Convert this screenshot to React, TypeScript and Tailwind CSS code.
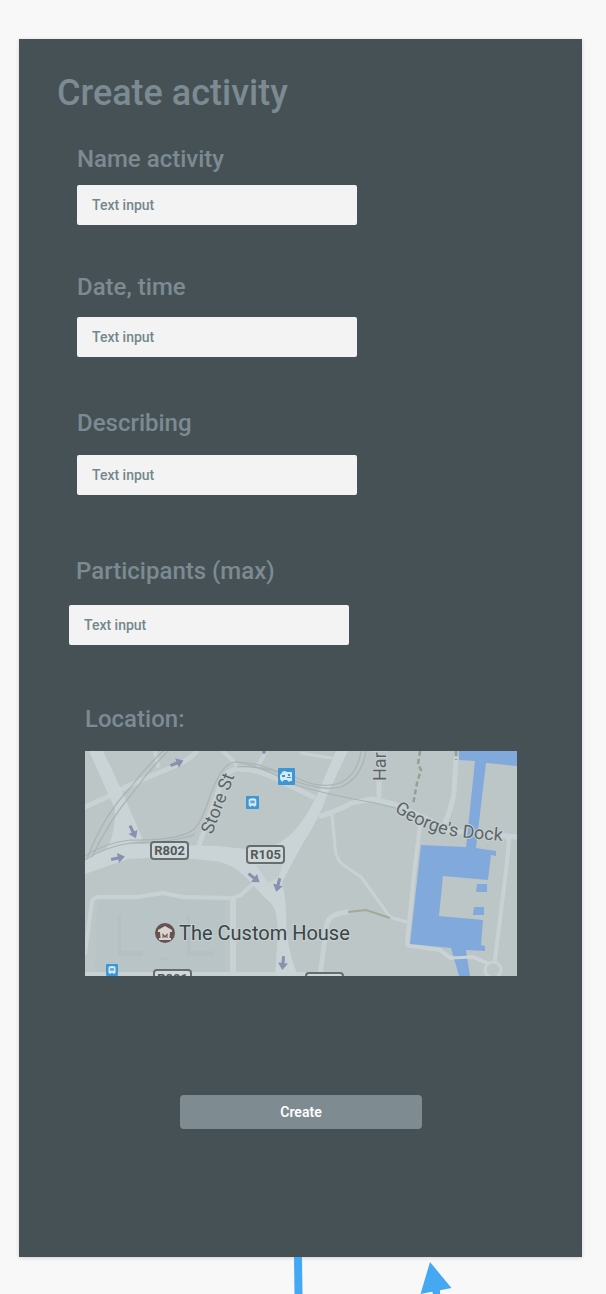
import React from "react";

type FieldProps = {
  id: string;
  label: string;
  className: string;
  labelClass?: string;
};

function Field({ id, label, className, labelClass = "" }: FieldProps) {
  return (
    <div className={`flex max-w-[280px] flex-col ${className}`}>
      <label htmlFor={id} className={`text-2xl leading-8 font-medium whitespace-nowrap ${labelClass}`}>
        {label}
      </label>
      <input
        id={id}
        type="text"
        placeholder="Text input"
        className="h-10 w-full rounded-xs bg-[#f3f3f3] px-[15px] text-sm font-medium text-[#5f7378] outline-none placeholder:text-[#74878c] placeholder:opacity-100"
      />
    </div>
  );
}

function RoadArrow({ x, y, angle }: { x: number; y: number; angle: number }) {
  return (
    <path
      d="M-7 -1.5H0V-5L7 0L0 5V1.5H-7Z"
      fill="#8791b0"
      transform={`translate(${x} ${y}) rotate(${angle})`}
    />
  );
}

function RoadSign({ x, y, name }: { x: number; y: number; name: string }) {
  return (
    <g>
      <rect x={x} y={y} width="37" height="17" rx="3" fill="#d0d9da" stroke="#666c70" strokeWidth="2" />
      <text x={x + 18.5} y={y + 13} textAnchor="middle" fontSize="13" fontWeight="700" fill="#55595c">
        {name}
      </text>
    </g>
  );
}

function TransitStop({ x, y, size }: { x: number; y: number; size: number }) {
  return (
    <svg x={x} y={y} width={size} height={size} viewBox="0 0 12 12">
      <rect width="12" height="12" rx="1" fill="#3c97d4" />
      <path d="M2.500 3.500Q2.500 2 6 2T9.500 3.500V9H8.500V10H7.200V9H4.800V10H3.500V9H2.500Z" fill="#d8e8f2" />
      <path d="M4 4.200H8V6.700H4Z" fill="#5aa5d8" />
    </svg>
  );
}

function LocationMap() {
  return (
    <svg
      viewBox="0 0 432 225"
      role="img"
      aria-label="Map around The Custom House"
      className="block w-full"
      fontFamily="Roboto, sans-serif"
    >
      <defs>
        <path id="dock-road" d="M309 60C325 71 342 79 358 83C374 87 395 88 450 93" />
      </defs>
      <rect width="432" height="225" fill="#bcc6c7" />

      <path d="M12 151L52 149L78 144L98 149L140 151V225H10Z" fill="#b9c4c7" />
      <g fill="#b5c0c3">
        <path d="M33 164H36V200H58V205H33Z" />
        <path d="M102 164H105V200H128V205H102Z" />
        <path d="M74 209Q79 202 84 209L82 210Q79 206 76 210Z" />
      </g>

      <g fill="none" stroke="#c8d2d4" strokeLinecap="round" strokeLinejoin="round">
        <path d="M0 202L7 150Q9 146 15 146L52 146L78 142L98 146L148 147" strokeWidth="4" />
        <path d="M148 148V225" strokeWidth="6" />
        <path d="M0 223H220" strokeWidth="4" />
        <path d="M148 147L156 144L168 133" strokeWidth="4" />
        <path d="M180 113V133M176 127H192" strokeWidth="2" />
        <path d="M0 56L20 47L45 34L85 17Q104 10 112 0" strokeWidth="5" />
        <path d="M70 0L73 15M138 0L151 13M181 0L173 15" strokeWidth="4" />
        <path d="M114 94L134 38Q140 19 152 18Q171 17 200 32L228 46" strokeWidth="5" />
        <path d="M216 2L246 7" strokeWidth="3" />
        <path d="M236 65Q250 61 267 52L286 48L309 53L340 67L365 80L432 86" strokeWidth="5" />
        <path d="M247 64L250 96Q251 108 257 113L276 126L305 166L321 171" strokeWidth="3" />
        <path d="M294 28V45M371 8L369 42Q367 55 360 72" strokeWidth="5" />
        <path d="M335 75L330 114L322 192Q322 195 326 195L355 199L365 207L388 206L402 212M424 88L422 112L410 209" strokeWidth="4" />
        <circle cx="408" cy="219" r="8" strokeWidth="3" />
        <path d="M263 161Q246 162 242 172L235 225" strokeWidth="5" />
      </g>

      <g fill="#cad4d6">
        <path d="M4 0H18L36 38L58 89L20 98Q30 88 30 58Z" />
        <path d="M0 108Q28 92 53 93L133 95L160 98Q186 100 200 88Q217 76 233 42L251 0H263L243 42Q233 70 218 92L197 131Q201 150 201 160Q200 195 213 225H190L193 180Q192 154 183 150L167 133Q149 111 127 110Q90 104 43 108L0 123Z" />
      </g>
      <path d="M171 114L179 126L183 132L193 127L198 113Z" fill="#c1cbcd" />

      <g fill="none" stroke="#aab3b6" strokeWidth="1.2">
        <path d="M78 0Q59 18 45 37Q18 65 2 108M83 0Q64 19 50 39Q24 69 7 106" />
        <path d="M0 105Q20 92 45 89Q93 90 108 79Q116 73 125 45Q137 12 150 11Q178 11 203 27Q234 41 256 36Q277 27 281 0" />
        <path d="M0 109Q20 96 45 92Q94 91 110 83" />
        <path d="M150 11Q175 14 205 32Q234 42 290 52L314 58" />
        <path d="M152 16Q176 14 210 26Q234 39 255 32Q273 23 276 0" />
      </g>

      <g fill="#82a9dc">
        <path d="M374 0H432V15L401 12L391 97L411 100V105L406 104L403 129L358 125L354 165L398 169L396 194L400 195V200L381 199L385 225H374L366 197L325 193L336 94L381 96L390 10L374 9Z" />
        <path d="M392 133H402V141H391ZM389 156H399V164H388Z" />
      </g>
      <path d="M358 201L365 207L388 206L402 212" fill="none" stroke="#cad4d6" strokeWidth="3" />
      <path d="M335 0L333 13L336 19L332 32L328 54M371 0V9" fill="none" stroke="#969f93" strokeWidth="2.500" strokeDasharray="5 3" />
      <path d="M263 161L281 159L305 167" fill="none" stroke="#a3a994" strokeWidth="2" />

      <RoadArrow x={92} y={12} angle={-22} />
      <RoadArrow x={48} y={81} angle={65} />
      <RoadArrow x={33} y={107} angle={-12} />
      <RoadArrow x={169} y={127} angle={38} />
      <RoadArrow x={193} y={134} angle={105} />
      <RoadArrow x={198} y={212} angle={95} />
      <circle cx="179" cy="1" r="2" fill="#8791b0" />

      <rect x="193" y="17" width="17" height="17" rx="1" fill="#3c97d4" />
      <path d="M196 23Q198 18 202 21H207V30H205L204 31L202 29H199L197 31L195 28V24Z" fill="#d8e8f2" />
      <path d="M197 24H200V26H197ZM203 23H205V25H203ZM202 26H206V27H202Z" fill="#3c97d4" />
      <TransitStop x={161} y={45} size={13} />
      <TransitStop x={21} y={213} size={12} />

      <RoadSign x={66} y={91} name="R802" />
      <RoadSign x={162} y={95} name="R105" />
      <RoadSign x={69} y={219} name="R801" />
      <RoadSign x={221} y={222} name="R801" />

      <g fill="#5c6467" stroke="#c6d0d1" strokeWidth="2" paintOrder="stroke">
        <text fontSize="18" transform="translate(127 84) rotate(-69)">Store St</text>
        <text fontSize="18" transform="translate(301 30) rotate(-90)">Harbour</text>
        <text fontSize="18">
          <textPath href="#dock-road">George's Dock</textPath>
        </text>
      </g>

      <circle cx="80" cy="182" r="10" fill="#665350" />
      <path d="M73 179L80 175L87 179V181H73ZM75 181H85L84.500 187H86V189H74V187H75.500Z" fill="#d9d3d1" />
      <path d="M77.500 182L80 185L82.500 182V187H81.500V185L80 187L78.500 185V187H77.500Z" fill="#665350" />
      <text x="94" y="189" fontSize="20" fill="#3b4448" stroke="#c6d0d1" strokeWidth="2" paintOrder="stroke">
        The Custom House
      </text>
    </svg>
  );
}

export default function App() {
  return (
    <div className="min-h-screen overflow-hidden bg-[#f8f8f8] pt-[39px] font-[Roboto,sans-serif]">
      <main className="mr-6 ml-[19px] bg-[#465156] pt-[33px] pb-32 text-[#7b8b91] shadow-[0_1px_4px_rgba(0,0,0,0.15)]">
        <h1 className="ml-[38px] text-4xl leading-[42px] font-medium">Create activity</h1>
        <form onSubmit={(event) => event.preventDefault()}>
          <Field id="activity-name" label="Name activity" className="mt-[29px] ml-[58px] gap-[10px]" />
          <Field id="activity-date" label="Date, time" className="mt-[46px] ml-[58px] gap-[14px]" />
          <Field id="activity-description" label="Describing" className="mt-[50px] ml-[58px] gap-4" />
          <Field
            id="activity-participants"
            label="Participants (max)"
            className="mt-[60px] ml-[50px] gap-[18px]"
            labelClass="pl-[7px]"
          />
          <section className="mt-[58px] mr-[65px] ml-[66px]">
            <h2 className="mb-4 text-2xl leading-8 font-medium">Location:</h2>
            <LocationMap />
          </section>
          <div className="mt-[119px] mr-[160px] ml-[161px]">
            <button
              type="submit"
              className="block h-[34px] w-full rounded bg-[#7e8c92] text-sm font-semibold text-white"
            >
              Create
            </button>
          </div>
        </form>
      </main>
      <svg width="606" height="37" viewBox="0 0 606 37" className="block" aria-hidden="true">
        <g fill="#45a8f3">
          <path d="M294 0H302L302.500 37H294.500Z" />
          <path d="M430 5L451.500 31L420.500 37Z" />
          <path d="M432 34L440 32V37H433Z" />
        </g>
      </svg>
    </div>
  );
}
